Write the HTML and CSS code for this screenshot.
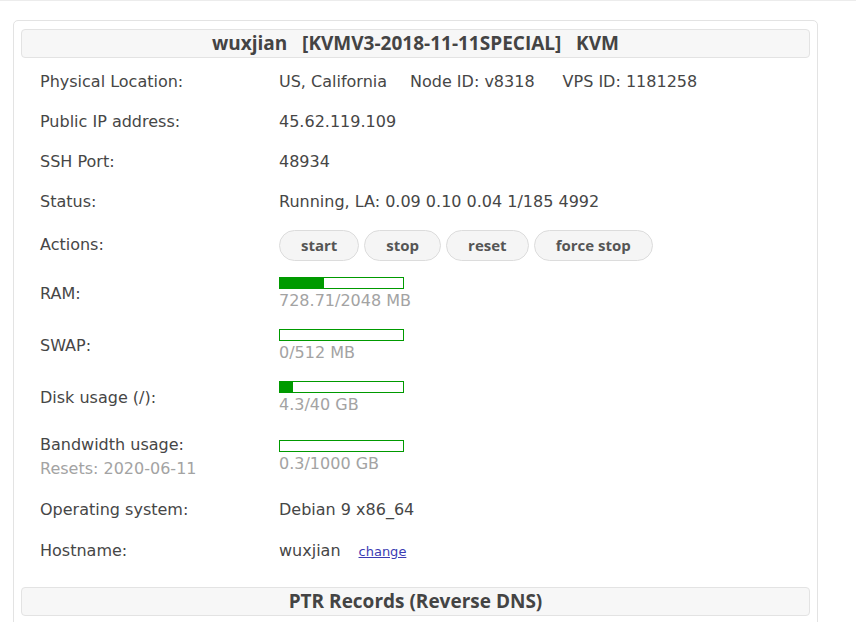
FILE: index.html
```html
<!DOCTYPE html>
<html>
<head>
<meta charset="utf-8">
<link rel="stylesheet" href="styles.css">
</head>
<body>
<div class="topline"></div>
<div class="card">
  <div class="bar-title">wuxjian&nbsp;&nbsp;&nbsp;[KVMV3-2018-11-11SPECIAL]&nbsp;&nbsp;&nbsp;KVM</div>
  <div class="info">
    <div class="row"><div class="label">Physical Location:</div><div class="value"><span class="seg">US, California</span><span class="seg seg-wide">Node ID: v8318</span><span>VPS ID: 1181258</span></div></div>
    <div class="row"><div class="label">Public IP address:</div><div class="value">45.62.119.109</div></div>
    <div class="row"><div class="label">SSH Port:</div><div class="value">48934</div></div>
    <div class="row"><div class="label">Status:</div><div class="value">Running, LA: 0.09 0.10 0.04 1/185 4992</div></div>
    <div class="row row-actions"><div class="label">Actions:</div><div class="value buttons"><button class="btn">start</button><button class="btn">stop</button><button class="btn">reset</button><button class="btn">force stop</button></div></div>
    <div class="row row-bar"><div class="label">RAM:</div><div class="value meter-cell"><div class="meter"><div class="fill" style="width:35.6%"></div></div><div class="meter-text">728.71/2048 MB</div></div></div>
    <div class="row row-bar"><div class="label">SWAP:</div><div class="value meter-cell"><div class="meter"><div class="fill" style="width:0%"></div></div><div class="meter-text">0/512 MB</div></div></div>
    <div class="row row-bar"><div class="label">Disk usage (/):</div><div class="value meter-cell"><div class="meter"><div class="fill" style="width:10.75%"></div></div><div class="meter-text">4.3/40 GB</div></div></div>
    <div class="row row-bw"><div class="label two"><div>Bandwidth usage:</div><div class="muted">Resets: 2020-06-11</div></div><div class="value meter-cell"><div class="meter"><div class="fill" style="width:0.03%"></div></div><div class="meter-text">0.3/1000 GB</div></div></div>
    <div class="row"><div class="label">Operating system:</div><div class="value">Debian 9 x86_64</div></div>
    <div class="row row-host"><div class="label">Hostname:</div><div class="value">wuxjian<a class="link" href="#">change</a></div></div>
  </div>
  <div class="bar-title">PTR Records (Reverse DNS)</div>
</div>
</body>
</html>
```
FILE: styles.css
```css
html, body {
  margin: 0;
  padding: 0;
  background: #fff;
}
body {
  font-family: "DejaVu Sans", Verdana, sans-serif;
  font-size: 16px;
  color: #464646;
  height: 622px;
  overflow: hidden;
}
.topline {
  height: 1px;
  background: #ececec;
}
.card {
  box-sizing: border-box;
  margin: 19px 0 0 13px;
  width: 805px;
  border: 1px solid #e3e3e3;
  border-radius: 5px;
  padding: 8px 7px 20px 7px;
}
.bar-title {
  height: 27px;
  border: 1px solid #e3e3e3;
  border-radius: 4px;
  background: #f7f7f7;
  font-family: "Open Sans", sans-serif;
  font-weight: 700;
  font-size: 19px;
  line-height: 27px;
  text-align: center;
  color: #444;
}
.info {
  padding: 4px 0 15px 19px;
}
.row {
  display: grid;
  grid-template-columns: 239px 1fr;
  align-items: center;
  height: 40px;
}
.row-actions { height: 46px; }
.row-bar { height: 52px; }
.row-bw { height: 66px; }
.row-host { height: 42px; }
.label {
  line-height: 20px;
}
.label.two {
  line-height: 24.5px;
}
.muted {
  color: #a3a3a3;
}
.value {
  line-height: 20px;
  display: flex;
  align-items: center;
}
.seg {
  margin-right: 23px;
}
.seg-wide {
  margin-right: 28px;
}
.buttons {
  gap: 5px;
}
.btn {
  height: 31px;
  border: 1px solid #dcdcdc;
  border-radius: 16px;
  background: #f5f5f5;
  font-family: "Open Sans", sans-serif;
  font-weight: 700;
  font-size: 15px;
  color: #555;
  padding: 0 21px;
  margin: 0;
  line-height: 29px;
}
.meter-cell {
  flex-direction: column;
  align-items: flex-start;
}
.meter {
  width: 123px;
  height: 10px;
  border: 1px solid #009a00;
  background: #fff;
  margin-bottom: 2px;
}
.fill {
  height: 100%;
  background: #009a00;
}
.meter-text {
  color: #a3a3a3;
  line-height: 20px;
}
.link {
  margin-left: 18px;
  font-size: 13px;
  color: #3b3bb3;
  text-decoration: underline;
  margin-top: 2px;
}
```
